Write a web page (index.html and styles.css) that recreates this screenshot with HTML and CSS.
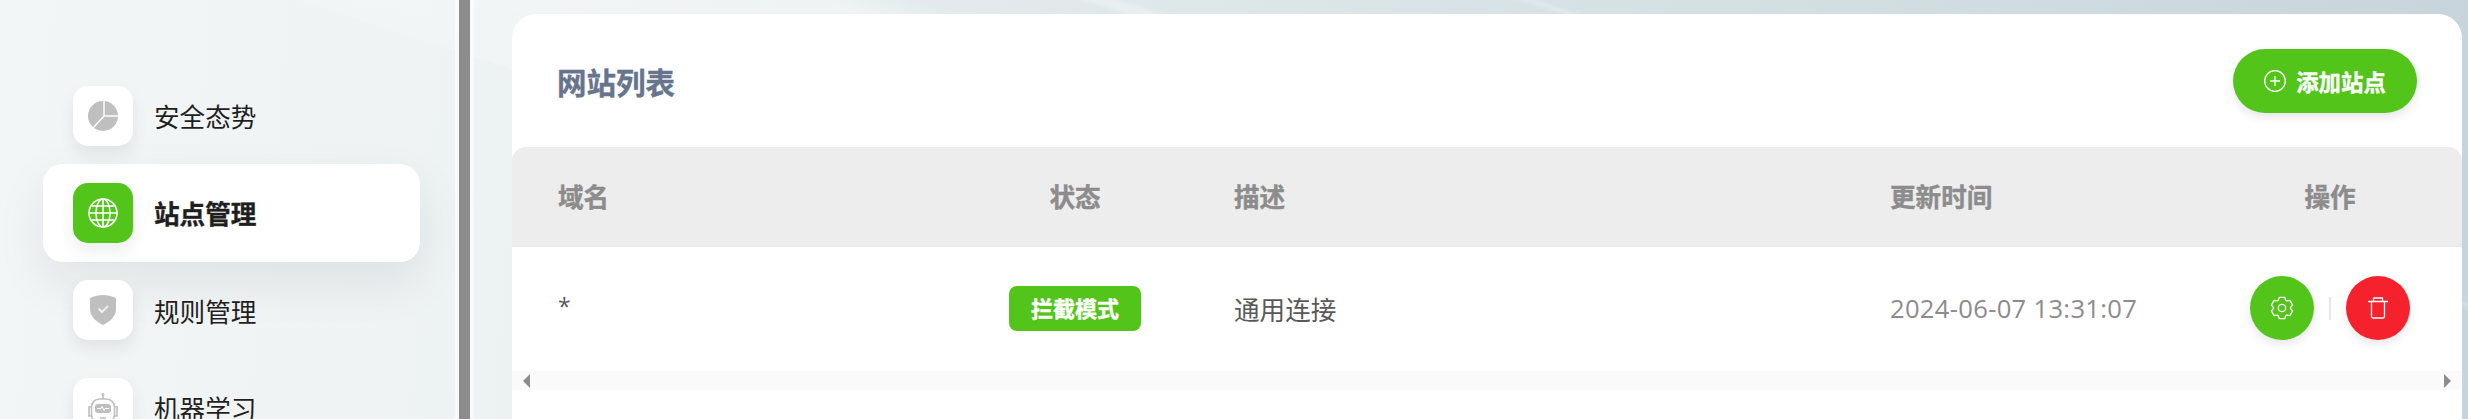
FILE: index.html
```html
<!DOCTYPE html>
<html lang="zh-CN">

<head>
    <meta charset="UTF-8">
    <title>站点管理</title>
    <link rel="stylesheet" href="styles.css">
</head>

<body>
    <div class="sidebar">
        <div class="nav-item">
            <div class="nav-icon">
                <svg width="30" height="30" viewBox="0 0 30 30">
                    <circle cx="15" cy="15" r="15" fill="#bfbfbf" />
                    <path d="M16 0V15H30M16 15L5 27" fill="none" stroke="#fff" stroke-width="1.4" />
                </svg>
            </div>
            <span>安全态势</span>
        </div>
        <div class="nav-item active">
            <div class="nav-icon">
                <svg width="30" height="30" viewBox="0 0 30 30" fill="none" stroke="#fff" stroke-width="1.6">
                    <circle cx="15" cy="15" r="14" />
                    <ellipse cx="15" cy="15" rx="7" ry="14" />
                    <path d="M15 1V29M1 15H29M3.5 8H26.500M3.500 22H26.500" />
                </svg>
            </div>
            <span>站点管理</span>
        </div>
        <div class="nav-item">
            <div class="nav-icon">
                <svg width="26" height="30" viewBox="0 0 26 30">
                    <path d="M13 0C17 0 22 1 26 3V14C26 22 19 27 13 30C7 27 0 22 0 14V3C4 1 9 0 13 0Z" fill="#bfbfbf" />
                    <path d="M8.500 13.500L12 17L18 11" fill="none" stroke="#eee" stroke-width="2" />
                </svg>
            </div>
            <span>规则管理</span>
        </div>
        <div class="nav-item">
            <div class="nav-icon">
                <svg width="30" height="30" viewBox="0 0 30 30" fill="none" stroke="#bfbfbf" stroke-width="1.6">
                    <path d="M15 1V6" />
                    <circle cx="15" cy="1.500" r="1.500" fill="#bfbfbf" stroke="none" />
                    <rect x="3.500" y="6" width="23" height="24" rx="8" />
                    <path d="M3 14H1V23H3M27 14H29V23H27" />
                    <rect x="7" y="11" width="16" height="9" rx="3" fill="#bfbfbf" stroke="none" />
                    <path d="M9 15.500H13L14 13.500L16 17.500L17 15.500H21" stroke="#fff" stroke-width="1" />
                    <path d="M12 25H18" />
                </svg>
            </div>
            <span>机器学习</span>
        </div>
    </div>

    <div class="gutter">
        <div class="gutter-bar"></div>
    </div>

    <div class="main">
        <div class="card">
            <div class="card-head">
                <h2>网站列表</h2>
                <button class="add-btn">
                    <svg width="22" height="22" viewBox="0 0 22 22" fill="none" stroke="#fff" stroke-width="1.300">
                        <circle cx="11" cy="11" r="10.300" />
                        <path d="M11 6V16M6 11H16" />
                    </svg>
                    添加站点
                </button>
            </div>

            <table class="site-table">
                <colgroup>
                    <col class="col-domain">
                    <col class="col-status">
                    <col class="col-desc">
                    <col class="col-time">
                    <col class="col-ops">
                </colgroup>
                <thead>
                    <tr>
                        <th>域名</th>
                        <th class="center">状态</th>
                        <th>描述</th>
                        <th>更新时间</th>
                        <th class="center">操作</th>
                    </tr>
                </thead>
                <tbody>
                    <tr>
                        <td class="domain">*</td>
                        <td class="center"><span class="badge">拦截模式</span></td>
                        <td class="desc">通用连接</td>
                        <td class="time">2024-06-07 13:31:07</td>
                        <td>
                            <div class="ops">
                                <button class="round-btn green">
                                    <svg width="24" height="24" viewBox="0 0 24 24" fill="none" stroke="#fff"
                                        stroke-width="1.300" stroke-linejoin="round">
                                        <path
                                            d="M9.340 1.330H14.660L15.770 4.270L16.810 4.870L19.910 4.360L22.570 8.970L20.580 11.400V12.600L22.570 15.030L19.910 19.640L16.810 19.130L15.770 19.730L14.660 22.670H9.340L8.230 19.730L7.190 19.130L4.090 19.640L1.430 15.030L3.420 12.600V11.400L1.430 8.970L4.090 4.360L7.190 4.870L8.230 4.270Z" />
                                        <circle cx="12" cy="12" r="3.700" />
                                    </svg>
                                </button>
                                <div class="divider"></div>
                                <button class="round-btn red">
                                    <svg width="20" height="22" viewBox="0 0 20 22" fill="none" stroke="#fff"
                                        stroke-width="1.300" stroke-linejoin="round">
                                        <path
                                            d="M0 4.500H20M5.500 4.500V1H14.500V4.500M3.500 4.500V19.500Q3.500 21 5 21H15Q16.500 21 16.500 19.500V4.500" />
                                    </svg>
                                </button>
                            </div>
                        </td>
                    </tr>
                </tbody>
            </table>

            <div class="hscroll">
                <div class="arrow-left"></div>
                <div class="arrow-right"></div>
            </div>
        </div>
    </div>
</body>

</html>
```

FILE: styles.css
```css
html,
body {
    height: 100%;
}

body {
    display: flex;
    margin: 0;
    overflow: hidden;
    font-family: "Noto Sans CJK SC", "Liberation Sans", sans-serif;
    background:
        linear-gradient(198deg, rgba(255, 255, 255, 0) 286px, rgba(255, 255, 255, 0.2) 290px, rgba(255, 255, 255, 0) 296px, rgba(255, 255, 255, 0) 414px, rgba(255, 255, 255, 0.3) 420px, rgba(255, 255, 255, 0.3) 425px, rgba(255, 255, 255, 0) 431px, rgba(255, 255, 255, 0) 480px, rgba(255, 255, 255, 0.4) 510px, rgba(255, 255, 255, 0.2) 669px, rgba(255, 255, 255, 0) 672px),
        linear-gradient(95deg, #f3f6f7 0%, #edf2f3 20%, #e6edef 30%, #c6d5db 100%);
}

.sidebar {
    flex: 0 0 455px;
    padding-top: 67px;
    box-sizing: border-box;
    overflow: hidden;
}

.nav-item {
    display: flex;
    align-items: center;
    gap: 21px;
    height: 97.3px;
    margin-left: 43px;
    width: 377px;
    padding-left: 30px;
    box-sizing: border-box;
    border-radius: 20px;
    font-size: 25.6px;
    color: #1f1f1f;
}

.nav-item.active {
    background-color: #fff;
    box-shadow: 0 20px 50px rgba(0, 30, 40, 0.08);
    font-weight: 700;
    -webkit-text-stroke: 0.4px #1f1f1f;
}

.nav-icon {
    display: flex;
    align-items: center;
    justify-content: center;
    flex: 0 0 60px;
    height: 60px;
    border-radius: 15px;
    background-color: #fff;
    box-shadow: 0 8px 16px rgba(0, 30, 40, 0.08);
}

.active .nav-icon {
    background-color: #52c41a;
}

.gutter {
    display: flex;
    justify-content: center;
    flex: 0 0 19px;
    background-color: rgba(255, 255, 255, 0.6);
}

.gutter-bar {
    width: 11px;
    background-color: #8c8c8c;
}

.main {
    flex: 1;
    padding: 14px 6px 0 38px;
    min-width: 0;
}

.card {
    height: 100%;
    border-radius: 24px 24px 0 0;
    background-color: #fff;
}

.card-head {
    display: flex;
    align-items: center;
    justify-content: space-between;
    height: 133px;
    padding: 0 45px;
    box-sizing: border-box;
}

.card-head h2 {
    margin: 1px 0 0;
    font-size: 29.5px;
    font-weight: 700;
    color: #67748e;
    -webkit-text-stroke: 0.4px #67748e;
}

.add-btn {
    display: flex;
    align-items: center;
    justify-content: center;
    gap: 10px;
    width: 184px;
    height: 64px;
    padding: 0;
    border: none;
    border-radius: 32px;
    background-color: #52c41a;
    box-shadow: 0 4px 10px rgba(0, 0, 0, 0.1);
    color: #fff;
    font-family: inherit;
    font-size: 22.4px;
    font-weight: 700;
    -webkit-text-stroke: 0.4px #fff;
}

.site-table {
    width: 100%;
    table-layout: fixed;
    border-collapse: separate;
    border-spacing: 0;
}

.col-domain {
    width: 420px;
}

.col-status {
    width: 286px;
}

.col-desc {
    width: 656px;
}

.col-time {
    width: 324px;
}

.site-table th {
    height: 100px;
    padding: 0 16px 2px;
    box-sizing: border-box;
    background-color: #ededed;
    border-bottom: 1px solid #e6e6e6;
    text-align: left;
    font-size: 25.6px;
    font-weight: 700;
    color: #8c8c8c;
    -webkit-text-stroke: 0.4px #8c8c8c;
}

.site-table th:first-child {
    border-top-left-radius: 14px;
}

.site-table th:last-child {
    border-top-right-radius: 14px;
}

.site-table th:first-child,
.site-table td:first-child {
    padding-left: 46px;
}

.site-table td {
    height: 124px;
    padding: 0 16px 2px;
    box-sizing: border-box;
    font-size: 25.6px;
    color: #595959;
}

.site-table td.domain {
    padding-bottom: 6px;
    font-family: "Open Sans", sans-serif;
    font-size: 23px;
}

.site-table td.time {
    font-family: "Open Sans", sans-serif;
    letter-spacing: 0.3px;
    color: #8c8c8c;
}

.site-table .center {
    text-align: center;
}

.badge {
    display: inline-block;
    width: 132px;
    height: 45px;
    line-height: 43px;
    border-radius: 8px;
    background-color: #52c41a;
    color: #fff;
    font-size: 22px;
    font-weight: 700;
    -webkit-text-stroke: 0.4px #fff;
}

.ops {
    display: flex;
    align-items: center;
    justify-content: center;
    gap: 15px;
}

.round-btn {
    display: flex;
    align-items: center;
    justify-content: center;
    width: 64px;
    height: 64px;
    padding: 0;
    border: none;
    border-radius: 50%;
    box-shadow: 0 4px 10px rgba(0, 0, 0, 0.1);
}

.green {
    background-color: #52c41a;
}

.red {
    background-color: #f5222d;
}

.divider {
    width: 2px;
    height: 23px;
    background-color: #e8e8e8;
}

.hscroll {
    display: flex;
    align-items: center;
    justify-content: space-between;
    height: 19px;
    padding: 0 11px;
    background-color: #fafafa;
}

.arrow-left {
    border-top: 7px solid transparent;
    border-bottom: 7px solid transparent;
    border-right: 7px solid #8c8c8c;
}

.arrow-right {
    border-top: 7px solid transparent;
    border-bottom: 7px solid transparent;
    border-left: 7px solid #8c8c8c;
}
```
